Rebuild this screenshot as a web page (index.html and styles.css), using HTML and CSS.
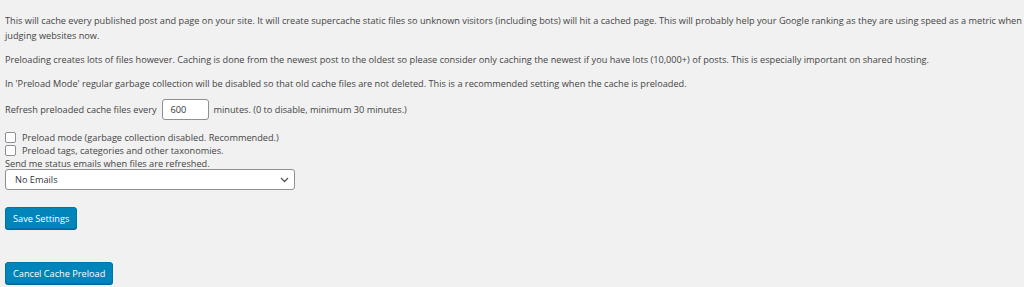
FILE: index.html
```html
<!DOCTYPE html>
<html>
<head>
<meta charset="utf-8">
<link rel="stylesheet" href="styles.css">
</head>
<body>
<div class="wrap">
  <p class="para first">This will cache every published post and page on your site. It will create supercache static files so unknown visitors (including bots) will hit a cached page. This will probably help your Google ranking as they are using speed as a metric when judging websites now.</p>
  <p class="para">Preloading creates lots of files however. Caching is done from the newest post to the oldest so please consider only caching the newest if you have lots (10,000+) of posts. This is especially important on shared hosting.</p>
  <p class="para">In 'Preload Mode' regular garbage collection will be disabled so that old cache files are not deleted. This is a recommended setting when the cache is preloaded.</p>
  <div class="refresh">
    <span>Refresh preloaded cache files every</span>
    <span class="num">600</span>
    <span>minutes. (0 to disable, minimum 30 minutes.)</span>
  </div>
  <div class="checks">
    <label class="check"><span class="box"></span><span>Preload mode (garbage collection disabled. Recommended.)</span></label>
    <label class="check"><span class="box"></span><span>Preload tags, categories and other taxonomies.</span></label>
  </div>
  <div class="emails">Send me status emails when files are refreshed.</div>
  <div class="select">
    <span>No Emails</span>
    <svg class="chev" width="9" height="6" viewBox="0 0 9 6"><path d="M1 1 L4.5 4.5 L8 1" fill="none" stroke="#50575e" stroke-width="1.3"/></svg>
  </div>
  <div class="actions">
    <span class="btn">Save Settings</span>
  </div>
  <div class="actions second">
    <span class="btn">Cancel Cache Preload</span>
  </div>
</div>
</body>
</html>
```
FILE: styles.css
```css
html, body {
  margin: 0;
  padding: 0;
  background: #f1f1f1;
}
body {
  font-family: "Open Sans", "Noto Sans", sans-serif;
  font-size: 9.2px;
  color: #444;
  width: 1024px;
  height: 287px;
  overflow: hidden;
}
.wrap {
  padding: 13px 0 0 5px;
  width: 1019px;
}
.para {
  margin: 0 0 9px 0;
  line-height: 15px;
}
.refresh {
  display: flex;
  align-items: center;
  gap: 5px;
  margin-top: -1px;
}
.num {
  width: 37px;
  height: 19px;
  border: 1px solid #8c8f94;
  border-radius: 3px;
  background: #fff;
  padding-left: 8px;
  display: flex;
  align-items: center;
  color: #32373c;
}
.checks {
  margin-top: 12px;
  display: flex;
  flex-direction: column;
  gap: 2px;
}
.check {
  display: flex;
  align-items: center;
  gap: 6px;
  height: 11px;
}
.box {
  width: 9px;
  height: 9px;
  border: 1px solid #8c8f94;
  border-radius: 2px;
  background: #fff;
}
.emails {
  margin-top: 1px;
  line-height: 13px;
}
.select {
  margin-top: -1px;
  width: 274px;
  height: 19px;
  border: 1px solid #8c8f94;
  border-radius: 3px;
  background: #fff;
  padding: 0 5px 0 9px;
  display: flex;
  align-items: center;
  justify-content: space-between;
  color: #32373c;
}
.actions {
  margin-top: 17px;
  display: flex;
}
.actions.second {
  margin-top: 33px;
}
.btn {
  background: #0085ba;
  border: 1px solid #0073aa;
  border-radius: 3px;
  box-shadow: 0 1px 0 #006799;
  color: #fff;
  height: 20px;
  padding: 0 7px;
  display: flex;
  align-items: center;
}
```
